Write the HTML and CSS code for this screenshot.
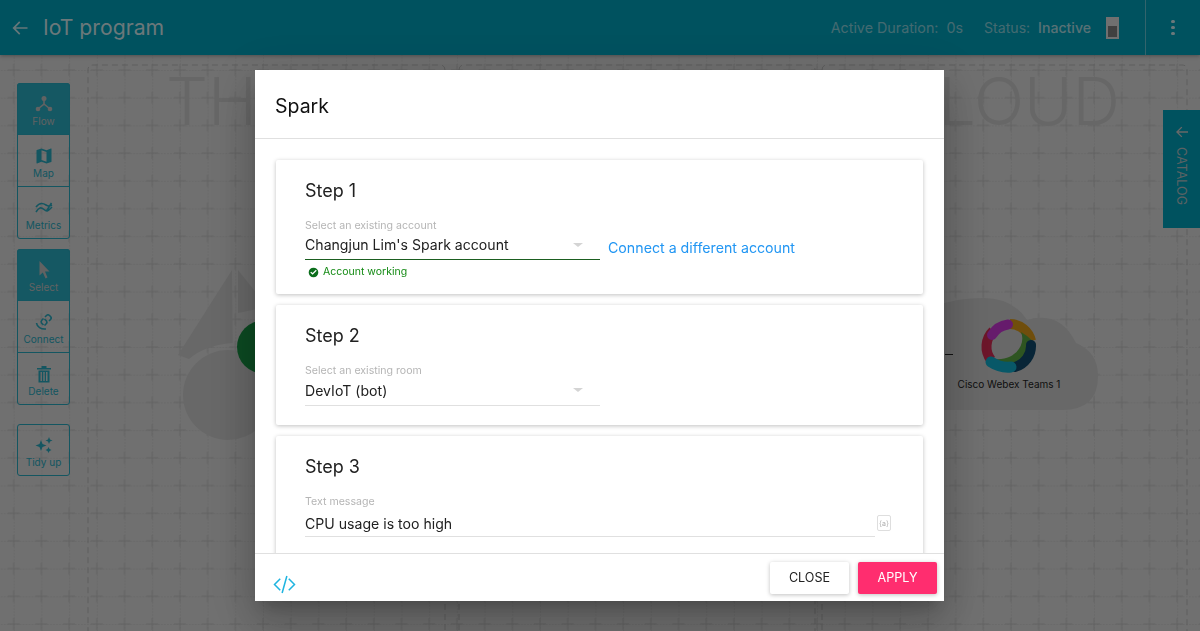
FILE: index.html
```html
<!DOCTYPE html>
<html lang="en">
<head>
  <meta charset="UTF-8" />
  <title>IoT program</title>
  <link rel="stylesheet" href="styles.css">
</head>
<body>

  <!-- Top bar -->
  <header class="topbar">
    <svg class="back-icon" viewBox="0 0 24 24"><path d="M21 11H6.830l5.590-5.590L11 4l-8 8 8 8 1.410-1.410L6.830 13H21v-2z"/></svg>
    <div class="app-title">IoT program</div>
    <div class="run-info">
      <span class="duration">Active Duration:&nbsp; 0s</span>
      <span class="status">Status:&nbsp; <b>Inactive</b></span>
      <span class="switch"><i></i></span>
    </div>
    <div class="kebab"><i></i><i></i><i></i></div>
  </header>

  <!-- Canvas behind the dialog -->
  <main class="canvas">
    <svg class="scene" viewBox="0 55 1200 576">
      <defs>
        <pattern id="grid" x="13.7" y="70" width="27.7" height="27.7" patternUnits="userSpaceOnUse">
          <path class="grid-dots" d="M0 0H27.7M0 0V27.7"/>
          <path class="grid-cross" d="M-6 0H6M0 -6V6M21.7 0H33.7M27.7 -6V6M-6 27.7H6M0 21.7V33.7M21.7 27.7H33.7M27.7 21.7V33.7"/>
        </pattern>
      </defs>
      <rect class="grid-fill" x="0" y="55" width="1200" height="576"/>
      <path class="zone" d="M445 640V70Q445 65 440 65H93Q88 65 88 70V640"/>
      <path class="zone" d="M459 640V70Q459 65 464 65H810Q815 65 815 70V640"/>
      <path class="zone" d="M822 640V70Q822 65 827 65H1182Q1187 65 1187 70V640"/>

      <text class="zone-title" x="166" y="125">TH</text>
      <text class="zone-title zone-title-end" x="1120" y="125">LOUD</text>

      <!-- device node -->
      <path class="shape" d="M232 270L178 355L189 359Q205 345 232.700 343Z"/>
      <path class="shape" d="M238 270V313L262 308V300Z"/>
      <circle class="shape" cx="228" cy="395" r="45"/>
      <circle class="node-green" cx="263.500" cy="347" r="26.500"/>

      <!-- cloud node -->
      <path class="shape" d="M900 410V330Q930 298 983 298Q1013 298 1027 320Q1060 310 1076 343Q1098 352 1098 376Q1098 410 1062 410Z"/>
      <path class="wire" d="M945 354.500H953"/>
      <path class="logo-orange" d="M1010 324A22 22 0 0 1 1031 341"/>
      <path class="logo-red" d="M993 331A22 22 0 0 0 991 360"/>
      <path class="logo-green" d="M1021 332C1027 346 1012 364 989 358C1000 372 1029 370 1036 344L1027 336Z"/>
      <path class="logo-navy" d="M1031 345A22 22 0 0 1 1015 367"/>
      <path class="logo-purple" d="M992 335A22 22 0 0 1 1008 324.500"/>
      <path class="logo-teal" d="M991 362Q1000 368 1011 367"/>
      <text class="node-label" x="1009" y="387.500">Cisco Webex Teams 1</text>
    </svg>

    <!-- Tool palette -->
    <nav class="palette">
      <div class="tool-group">
        <div class="tool tool-on">
          <svg viewBox="0 0 20 20"><path class="stroke" d="M10 5V10L4.500 14.500M10 10L15.500 14.500"/><circle cx="10" cy="4.500" r="2.500"/><circle cx="4" cy="15" r="2.300"/><circle cx="16" cy="15" r="2.300"/></svg>
          <span>Flow</span>
        </div>
        <div class="tool">
          <svg viewBox="0 0 24 24"><path d="M20.500 3l-.16.03L15 5.100 9 3 3.360 4.900c-.21.07-.36.25-.36.48V20.500c0 .28.22.5.5.5l.16-.03L9 18.900l6 2.100 5.640-1.900c.21-.07.36-.25.36-.48V3.500c0-.28-.22-.5-.5-.5zM15 19l-6-2.110V5l6 2.110V19z"/></svg>
          <span>Map</span>
        </div>
        <div class="tool">
          <svg viewBox="0 0 20 20"><path class="stroke" d="M2 14C5 9 7 9 10 11.500S14 13 18 9M2 9C5 5 9 5 12 7S16 8 18 7M12.500 13L17.500 5"/></svg>
          <span>Metrics</span>
        </div>
      </div>
      <div class="tool-group">
        <div class="tool tool-on">
          <svg viewBox="0 0 20 20"><path d="M5.500 1L15.500 11.500H11L13.500 17.500L11.500 18.500L8.800 12.500L5.500 15.500Z"/></svg>
          <span>Select</span>
        </div>
        <div class="tool">
          <svg viewBox="0 0 20 20"><path class="stroke" d="M2.500 11C3 15 7 17.500 12 17M9.500 13L7.500 11Q6.500 9.500 8 8L9.500 6.500M10.500 7L12.500 9Q13.500 10.500 12 12L10.500 13.500M11 5L12.500 3.500Q14 2 15.500 3.500L16.500 4.500Q18 6 16.500 7.500L15 9"/></svg>
          <span>Connect</span>
        </div>
        <div class="tool">
          <svg viewBox="0 0 20 20"><path d="M3 4H7.500V2H12.500V4H17V5.500H3ZM4.500 6.500H15.500V18.500H4.500ZM6.500 8V17H8V8ZM9.300 8V17H10.700V8ZM12 8V17H13.500V8Z" fill-rule="evenodd"/></svg>
          <span>Delete</span>
        </div>
      </div>
      <div class="tool-group tool-single">
        <div class="tool">
          <svg viewBox="0 0 20 20"><path d="M7 5L8.500 9L12.500 10.500L8.500 12L7 16L5.500 12L1.500 10.500L5.500 9ZM15 2L16 4.500L18.500 5.500L16 6.500L15 9L14 6.500L11.500 5.500L14 4.500ZM14.500 12L15.500 14L17.500 15L15.500 16L14.500 18L13.500 16L11.500 15L13.500 14Z"/></svg>
          <span>Tidy up</span>
        </div>
      </div>
    </nav>

    <!-- Catalog tab -->
    <aside class="catalog-tab">
      <svg viewBox="0 0 24 24"><path d="M21 11H6.830l5.590-5.590L11 4l-8 8 8 8 1.410-1.410L6.830 13H21v-2z"/></svg>
      <span>CATALOG</span>
    </aside>
  </main>

  <!-- Dialog -->
  <div class="overlay">
    <section class="dialog">
      <h1 class="dialog-title">Spark</h1>

      <div class="dialog-body">
        <div class="card">
          <h2>Step 1</h2>
          <div class="field-row">
            <div class="field field-ok">
              <label>Select an existing account</label>
              <div class="value">Changjun Lim's Spark account<i class="caret"></i></div>
            </div>
            <a class="link">Connect a different account</a>
          </div>
          <div class="helper">
            <svg viewBox="0 0 24 24"><path d="M12 1.500a10.500 10.500 0 1 0 0 21 10.500 10.500 0 0 0 0-21zm-2 15.500l-5-5 1.900-1.900 3.100 3.100 7.100-7.100L19 8z"/></svg>
            Account working
          </div>
        </div>

        <div class="card">
          <h2>Step 2</h2>
          <div class="field-row">
            <div class="field">
              <label>Select an existing room</label>
              <div class="value">DevIoT (bot)<i class="caret"></i></div>
            </div>
          </div>
        </div>

        <div class="card">
          <h2>Step 3</h2>
          <div class="field-row">
            <div class="field field-wide">
              <label>Text message</label>
              <div class="value">CPU usage is too high</div>
            </div>
            <span class="var-chip">{a}</span>
          </div>
        </div>
      </div>

      <footer class="dialog-foot">
        <svg class="code-icon" viewBox="0 0 24 20"><path d="M7.500 4L1.500 10L7.500 16M16.500 4L22.500 10L16.500 16M14.500 1L9.500 19"/></svg>
        <button class="btn btn-plain">CLOSE</button>
        <button class="btn btn-apply">APPLY</button>
      </footer>
    </section>
  </div>

</body>
</html>
```

FILE: styles.css
```css
/* base */
* {
  box-sizing: border-box;
}
html, body {
  height: 100%;
}
body {
  margin: 0;
  display: flex;
  flex-direction: column;
  overflow: hidden;
  background-color: #e0e0e0;
  font-family: Inter, "Liberation Sans", sans-serif;
  color: #212121;
}

/* top bar */
.topbar {
  display: flex;
  align-items: center;
  height: 55px;
  flex-shrink: 0;
  padding-left: 10px;
  background-color: #00a4bf;
  box-shadow: 0 1px 4px rgba(0, 0, 0, .3);
  color: rgba(255, 255, 255, .85);
  position: relative;
  z-index: 2;
}
.back-icon {
  width: 20px;
  height: 20px;
  fill: rgba(255, 255, 255, .8);
}
.app-title {
  margin-left: 13px;
  font-size: 21.2px;
  line-height: 1;
}
.run-info {
  display: flex;
  align-items: center;
  margin-left: auto;
  font-size: 14.300px;
  color: rgba(255, 255, 255, .55);
}
.status {
  margin-left: 21px;
  font-size: 14.100px;
}
.status b {
  font-weight: 500;
  color: rgba(255, 255, 255, .7);
}
.switch {
  display: flex;
  align-items: flex-end;
  width: 13px;
  height: 22px;
  margin-left: 15px;
  padding: 2px;
  background-color: #e0e0e0;
}
.switch i {
  display: block;
  width: 100%;
  height: 11px;
  background-color: #808080;
}
.kebab {
  display: flex;
  flex-direction: column;
  align-items: center;
  justify-content: center;
  gap: 2.500px;
  width: 55px;
  height: 55px;
  margin-left: 26px;
  border-left: 1px solid rgba(255, 255, 255, .4);
}
.kebab i {
  width: 3.500px;
  height: 3.500px;
  border-radius: 50%;
  background-color: rgba(255, 255, 255, .85);
}

/* canvas */
.canvas {
  flex: 1;
  position: relative;
}
.scene {
  position: absolute;
  top: 0;
  left: 0;
  width: 100%;
  height: 100%;
}
.grid-fill {
  fill: url(#grid);
}
.grid-dots {
  fill: none;
  stroke: #c4c4c4;
  stroke-width: 1;
  stroke-dasharray: 1.500 1.500;
}
.grid-cross {
  fill: none;
  stroke: #c8c8c8;
  stroke-width: 1;
}
.zone {
  fill: none;
  stroke: #bcbcbc;
  stroke-width: 1;
  stroke-dasharray: 6 4;
}
.zone-title {
  font-family: Inter, "Liberation Sans", sans-serif;
  font-size: 66px;
  font-weight: 300;
  fill: #cecece;
}
.zone-title-end {
  text-anchor: end;
}
.shape {
  fill: #d0d0d0;
}
.node-green {
  fill: #189444;
}
.wire {
  stroke: #222;
  fill: none;
}
.node-label {
  font-family: Inter, "Liberation Sans", sans-serif;
  font-size: 10px;
  text-anchor: middle;
  fill: #222;
}
.logo-orange, .logo-red, .logo-navy, .logo-purple, .logo-teal {
  fill: none;
  stroke-width: 10;
}
.logo-navy, .logo-purple, .logo-teal {
  stroke-linecap: round;
}
.logo-orange { stroke: #e09c18; }
.logo-red { stroke: #d82c54; }
.logo-navy { stroke: #104a6e; }
.logo-purple { stroke: #cc36d8; }
.logo-teal { stroke: #10b0d0; stroke-width: 11; }
.logo-green { fill: #5caa42; }

/* tool palette */
.palette {
  position: absolute;
  top: 28px;
  left: 17px;
  display: flex;
  flex-direction: column;
  gap: 10px;
  width: 53px;
}
.tool-group {
  outline: 1px solid #28acc2;
  outline-offset: -1px;
  border-radius: 3px;
  overflow: hidden;
}
.tool-single {
  margin-top: 9px;
}
.tool {
  display: flex;
  flex-direction: column;
  align-items: center;
  height: 52px;
  padding-top: 11px;
  font-size: 10px;
  line-height: 12px;
  color: #28acc2;
  fill: #28acc2;
  border-bottom: 1px solid #28acc2;
}
.tool:last-child {
  border-bottom: 0;
}
.tool svg {
  width: 20px;
  height: 20px;
  margin-bottom: 1px;
}
.tool .stroke {
  fill: none;
  stroke: currentColor;
  stroke-width: 1.600;
}
.tool-on {
  background-color: #2ab0c6;
  color: #c4c4c4;
  fill: #c4c4c4;
}

/* catalog tab */
.catalog-tab {
  position: absolute;
  top: 55px;
  right: 0;
  display: flex;
  flex-direction: column;
  align-items: center;
  width: 37px;
  height: 118px;
  padding-top: 14px;
  background-color: #00a4bf;
  color: #b4c4c8;
  fill: #d0d0d0;
  font-size: 12.600px;
}
.catalog-tab svg {
  width: 16px;
  height: 16px;
  margin-bottom: 7px;
}
.catalog-tab span {
  writing-mode: vertical-rl;
}

/* dialog */
.overlay {
  position: fixed;
  top: 0;
  left: 0;
  right: 0;
  bottom: 0;
  z-index: 5;
  background-color: rgba(0, 0, 0, .5);
}
.dialog {
  display: flex;
  flex-direction: column;
  width: 689px;
  height: 531px;
  margin: 70px 0 0 255px;
  background-color: #fff;
  box-shadow: 0 11px 15px -7px rgba(0, 0, 0, .2), 0 24px 38px 3px rgba(0, 0, 0, .14), 0 9px 46px 8px rgba(0, 0, 0, .12);
}
.dialog-title {
  flex-shrink: 0;
  height: 69px;
  margin: 0;
  padding: 24px 20px 0;
  border-bottom: 1px solid #e0e0e0;
  font-size: 19.500px;
  line-height: 24px;
  font-weight: 400;
  color: #111;
}
.dialog-body {
  flex: 1;
  min-height: 0;
  overflow: hidden;
  display: flex;
  flex-direction: column;
  gap: 11px;
  padding: 21px 21px 0;
}
.card {
  flex-shrink: 0;
  padding: 20px 29px 0;
  height: 120px;
  border-radius: 2px;
  background-color: #fff;
  box-shadow: 0 1px 4px rgba(0, 0, 0, .25);
}
.card:first-child {
  height: 134px;
}
.card:last-child {
  height: 135px;
}
.card h2 {
  margin: 0;
  font-size: 18px;
  line-height: 22px;
  font-weight: 400;
  color: #212121;
}
.field-row {
  display: flex;
  align-items: flex-end;
  margin-top: 17px;
}
.field {
  width: 295px;
  border-bottom: 1px solid #e0e0e0;
}
.field-wide {
  width: 570px;
}
.field-ok {
  border-bottom-color: #1b5e20;
}
.field label {
  display: block;
  font-size: 10.600px;
  line-height: 13px;
  color: #b5b5b5;
}
.value {
  position: relative;
  height: 28px;
  padding-top: 5px;
  font-size: 14.100px;
  line-height: 18px;
  color: #212121;
}
.field-ok .value {
  height: 27px;
  padding-top: 4px;
}
.field-wide .value {
  padding-top: 7px;
}
.caret {
  position: absolute;
  top: 11px;
  right: 17px;
  border-style: solid;
  border-width: 4px 5px 0;
  border-color: #d4d4d4 transparent transparent;
}
.link {
  margin: 0 0 3px 8px;
  font-size: 14.200px;
  line-height: 18px;
  color: #2196f3;
}
.helper {
  display: flex;
  align-items: center;
  gap: 4px;
  margin: 5px 0 0 3px;
  font-size: 10.500px;
  line-height: 14px;
  color: #138a13;
}
.helper svg {
  width: 11px;
  height: 11px;
  fill: #0b6e1c;
}
.var-chip {
  display: flex;
  align-items: center;
  justify-content: center;
  width: 14px;
  height: 16px;
  margin: 0 0 6px 2px;
  border: 1px solid #dedede;
  border-radius: 2px;
  font-size: 7px;
  color: #b0b0b0;
}
.dialog-foot {
  flex-shrink: 0;
  display: flex;
  align-items: center;
  gap: 9px;
  height: 48px;
  padding: 0 7px 0 18px;
  border-top: 1px solid #e0e0e0;
  background-color: #fff;
  position: relative;
}
.code-icon {
  width: 23px;
  height: 19px;
  margin: 14px auto 0 0;
  fill: none;
  stroke: #1fb4e0;
  stroke-width: 1.600;
}
.btn {
  width: 79px;
  height: 32px;
  padding: 0;
  border: 0;
  border-radius: 2px;
  font-family: inherit;
  font-size: 12.600px;
  box-shadow: 0 1px 4px rgba(0, 0, 0, .25);
}
.btn-plain {
  background-color: #fff;
  color: #212121;
}
.btn-apply {
  background-color: #ff2d6f;
  color: #fff;
}
```
